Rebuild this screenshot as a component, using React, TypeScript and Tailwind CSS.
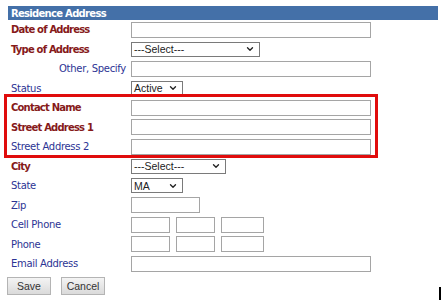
import { ChevronDown } from "lucide-react";

const redLabel = "text-[#861a1a] font-bold tracking-[-0.8px]";
const blueLabel = "text-[#2c3494] tracking-[-0.3px]";

function TextBox({ w }: { w: string }) {
  return <div className={`h-4 ${w} border border-[#a5a5a5] bg-white`} />;
}

function SelectBox({ w, value }: { w: string; value: string }) {
  return (
    <div
      className={`h-[15px] ${w} border border-[#7a7a7a] bg-white flex items-center justify-between pl-[2px] pr-[4px] font-['Liberation_Sans',Arial,sans-serif] text-[10.5px] leading-none text-[#222]`}
    >
      <span>{value}</span>
      <ChevronDown className="w-[10px] h-[10px]" strokeWidth={3.2} />
    </div>
  );
}

function Row({
  label,
  tone,
  right,
  children,
}: {
  label: string;
  tone: string;
  right?: boolean;
  children: React.ReactNode;
}) {
  return (
    <div className="grid grid-cols-[124px_1fr] items-center h-[19.5px]">
      <div className={`${tone} ${right ? "text-right pr-[5px]" : "pl-[4px]"} pt-[1px] whitespace-nowrap`}>{label}</div>
      <div className="flex items-center gap-[6px]">{children}</div>
    </div>
  );
}

function Button({ label }: { label: string }) {
  return (
    <div className="h-[18px] w-[44px] flex items-center justify-center border border-[#b4b4b4] bg-gradient-to-b from-[#f4f4f4] to-[#dadada] font-['Liberation_Sans',Arial,sans-serif] text-[10.5px] text-[#333]">
      {label}
    </div>
  );
}

export default function App() {
  return (
    <div className="relative w-[442px] h-[303px] bg-white overflow-hidden pl-[7px] pt-[6px] font-['DejaVu_Sans',Verdana,sans-serif] text-[10px] leading-none">
      <div className="ml-[1px] w-[430px] h-[14px] bg-[#4470a8] flex items-center pl-[3px] pt-[1px] text-white font-bold tracking-[-0.7px]">
        Residence Address
      </div>

      <Row label="Date of Address" tone={redLabel}>
        <TextBox w="w-[240px]" />
      </Row>
      <Row label="Type of Address" tone={redLabel}>
        <SelectBox w="w-[129px]" value="---Select---" />
      </Row>
      <Row label="Other, Specify" tone={blueLabel} right>
        <TextBox w="w-[240px]" />
      </Row>
      <Row label="Status" tone={blueLabel}>
        <SelectBox w="w-[52px]" value="Active" />
      </Row>

      <div className="relative">
        <Row label="Contact Name" tone={redLabel}>
          <TextBox w="w-[240px]" />
        </Row>
        <Row label="Street Address 1" tone={redLabel}>
          <TextBox w="w-[240px]" />
        </Row>
        <Row label="Street Address 2" tone={blueLabel}>
          <TextBox w="w-[240px]" />
        </Row>
        <div className="absolute left-[-3px] top-[-4px] w-[374px] h-[64px] border-[3px] border-[#e00c0c] pointer-events-none" />
      </div>

      <Row label="City" tone={redLabel}>
        <SelectBox w="w-[95px]" value="---Select---" />
      </Row>
      <Row label="State" tone={blueLabel}>
        <SelectBox w="w-[52px]" value="MA" />
      </Row>
      <Row label="Zip" tone={blueLabel}>
        <TextBox w="w-[69px]" />
      </Row>
      <Row label="Cell Phone" tone={blueLabel}>
        <TextBox w="w-[39px]" />
        <TextBox w="w-[39px]" />
        <TextBox w="w-[43px]" />
      </Row>
      <Row label="Phone" tone={blueLabel}>
        <TextBox w="w-[39px]" />
        <TextBox w="w-[39px]" />
        <TextBox w="w-[43px]" />
      </Row>
      <Row label="Email Address" tone={blueLabel}>
        <TextBox w="w-[240px]" />
      </Row>

      <div className="flex gap-[10px] mt-[3.5px]">
        <Button label="Save" />
        <Button label="Cancel" />
      </div>

      <div className="absolute left-[439px] top-[287px] w-[1.5px] h-[13px] bg-black" />
    </div>
  );
}
